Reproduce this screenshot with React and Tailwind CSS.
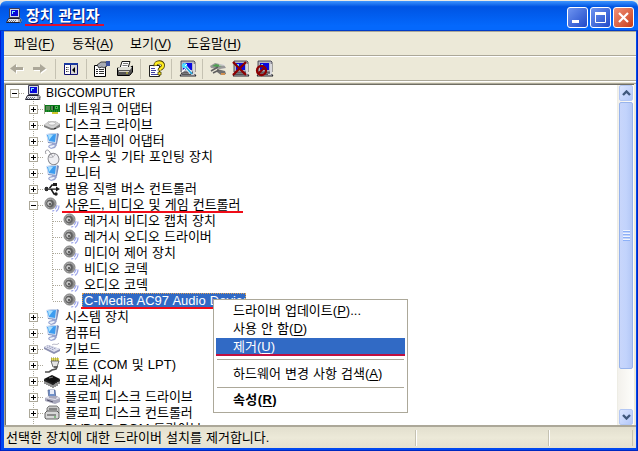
import React from "react";
import clsx from "clsx";

const menus = [
    { label: "파일", hotkey: "F", className: "w-[58px]" },
    { label: "동작", hotkey: "A", className: "w-[58px]" },
    { label: "보기", hotkey: "V", className: "w-[57px]" },
    { label: "도움말", hotkey: "H", className: "w-[70px]" },
];

const rows = [
    { level: 0, icon: "computer", label: "BIGCOMPUTER", open: true, size: "text-[12px]" },
    { level: 1, icon: "network", label: "네트워크 어댑터" },
    { level: 1, icon: "disk", label: "디스크 드라이브" },
    { level: 1, icon: "monitor", label: "디스플레이 어댑터" },
    { level: 1, icon: "mouse", label: "마우스 및 기타 포인팅 장치" },
    { level: 1, icon: "monitor", label: "모니터" },
    { level: 1, icon: "usb", label: "범용 직렬 버스 컨트롤러" },
    { level: 1, icon: "speaker", label: "사운드, 비디오 및 게임 컨트롤러", open: true, marked: true },
    { level: 2, icon: "speaker", label: "레거시 비디오 캡처 장치" },
    { level: 2, icon: "speaker", label: "레거시 오디오 드라이버" },
    { level: 2, icon: "speaker", label: "미디어 제어 장치" },
    { level: 2, icon: "speaker", label: "비디오 코덱" },
    { level: 2, icon: "speaker", label: "오디오 코덱" },
    { level: 2, icon: "speaker", label: "C-Media AC97 Audio Device", selected: true, last: true, size: "text-[13px]" },
    { level: 1, icon: "monitor", label: "시스템 장치" },
    { level: 1, icon: "monitor", label: "컴퓨터" },
    { level: 1, icon: "keyboard", label: "키보드" },
    { level: 1, icon: "port", label: "포트 (COM 및 LPT)" },
    { level: 1, icon: "cpu", label: "프로세서" },
    { level: 1, icon: "floppy", label: "플로피 디스크 드라이브" },
    { level: 1, icon: "controller", label: "플로피 디스크 컨트롤러" },
    { level: 1, icon: "disk", label: "DVD/CD-ROM 드라이브" },
];

const Pc = () => (
    <>
        <path d="M3.500 .5h10v9h-10z" fill="#d4d8e8" stroke="#404058" />
        <path d="M5 2h7v6H5z" fill="#0808d8" />
        <path d="M6 3h3v1H7v2H6z" fill="#80f0ff" />
        <path d="M2.500 10.500h11l1.500 4H.5z" fill="#e8e8ee" stroke="#202030" />
        <path d="M3 12.500h8M2 13.500h8" stroke="#70788c" strokeDasharray="1 1" />
        <path d="M12 11h2v3h-2z" fill="#a8a8b0" />
        <path d="M14 10l1.500 2-1.500 3" stroke="#888" fill="none" />
    </>
);

// larger front-facing machine used by the toolbar buttons
const Desktop = () => (
    <>
        <path d="M1 0h13l1 1v10H1z" fill="#b8b8c0" stroke="#303040" strokeWidth=".8" />
        <path d="M3 2h9v7H3z" fill="#0808e0" />
        <path d="M4 3h2v2H4z" fill="#60e8ff" />
        <path d="M2 12h12l2 3H0z" fill="#d0d0d4" stroke="#101018" strokeWidth=".9" />
        <path d="M13 3h2v10h-2z" fill="#d8d8dc" />
        <path d="M2 13.500h9" stroke="#555" />
    </>
);

const glyphs = {
    computer: <Pc />,
    network: (
        <>
            <path d="M0 3h1v10H0z" fill="#a0a890" />
            <path d="M1 4h15v7H1z" fill="#087818" />
            <path d="M2 5h4v4H2zM7 5h3v4H7z" fill="#103818" />
            <path d="M3 5v4M5 5v4M8 5v4" stroke="#a0d890" />
            <path d="M11 5h3v3h-3z" fill="#48b850" />
            <path d="M12 6h1v1h-1z" fill="#083810" />
            <path d="M8 11h6v2H8z" fill="#d0c830" />
            <path d="M2 10h13" stroke="#40a040" strokeDasharray="1 1" />
        </>
    ),
    disk: (
        <>
            <path d="M0 8l5-4h6l5 3v3l-6 3H7L0 10z" fill="#808080" />
            <path d="M0 8l5-4h6l5 3-6 4H7z" fill="#d2d2d2" />
            <ellipse cx="8" cy="6.500" rx="3.600" ry="1.700" fill="#f4f4f4" stroke="#999" strokeWidth=".6" />
            <path d="M10 11h2v1h-2z" fill="#303030" />
        </>
    ),
    monitor: (
        <>
            <path d="M3 1l10-1 2 1-2 10-9-1z" fill="#7c8cb8" />
            <path d="M2 1l11-1-1 10-8-1z" fill="#cfe0f6" />
            <path d="M3 2l9-1-1 8-6-1z" fill="#3c9cf0" />
            <path d="M4 2l5 0-4 5z" fill="#a8e0ff" />
            <path d="M8 10h4l1 2-2 3-4 1-3-2 1-2 3-1z" fill="#98a4d0" />
            <path d="M5 13l5-1 1 1-4 2z" fill="#f0f4fc" />
        </>
    ),
    mouse: (
        <>
            <path d="M2 5C0 1 4 0 5 2l2 3" fill="none" stroke="#98989e" />
            <ellipse cx="9.500" cy="10" rx="5.400" ry="5.800" fill="#f0f0f4" stroke="#84848a" strokeWidth=".9" transform="rotate(-25 9.500 10)" />
            <path d="M5 8c3 1 5 0 6-3M7 4.500l2 4" fill="none" stroke="#a4a4aa" strokeWidth=".8" />
        </>
    ),
    usb: (
        <>
            <path d="M3 8h10M5 8l3-4h3M7 8l3 5h2" fill="none" stroke="#181818" strokeWidth="1.500" />
            <path d="M0 8l3-2.500v5zM16 8l-4-2.500v5z" fill="#181818" />
            <path d="M1 6h3v4H1z" fill="#303030" />
            <path d="M9 2h4v3H9z" fill="#202020" />
            <circle cx="12" cy="13" r="1.700" fill="#202020" />
            <path d="M4 7.500h8" stroke="#bbb" strokeWidth=".5" />
        </>
    ),
    speaker: (
        <>
            <circle cx="6.500" cy="6.500" r="5.500" fill="#b4b4b4" stroke="#787878" />
            <path d="M7 2a5 5 0 0 1 4 6 6 6 0 0 1-6 4" fill="#888" />
            <circle cx="6" cy="6.500" r="3.800" fill="#606060" />
            <circle cx="5.500" cy="6.500" r="2.200" fill="#c8c8c8" />
            <circle cx="6" cy="7" r="1.100" fill="#484848" />
            <path d="M11 12c1-1 2-2 2-4M12 14.500c2-1.500 3-3 3-6M8 14c1 0 2 0 2-1" fill="none" stroke="#a0a8ec" strokeWidth="1.200" />
        </>
    ),
    keyboard: (
        <>
            <path d="M0 6l4-2 12 4v2l-6 3L0 8z" fill="#8c90b0" />
            <path d="M0 6l5-2 11 4-6 3z" fill="#e0e2f0" />
            <path d="M3 6l7 3M5 5l7 3" stroke="#8a8eb0" strokeDasharray="1 .8" />
            <path d="M8 4c2-2 5 1 7-2" fill="none" stroke="#b0b0c0" />
        </>
    ),
    port: (
        <>
            <path d="M7 1h8v3H7z" fill="#e8e060" />
            <path d="M7 1h8M7 3h8" stroke="#686820" strokeWidth=".8" strokeDasharray="1 1" />
            <path d="M7 4h8l-2 6H9z" fill="#e4e4e4" stroke="#505050" strokeWidth=".8" />
            <path d="M10 10h3l-1 2-4 1-3 2H1" fill="none" stroke="#505050" strokeWidth="1.600" />
        </>
    ),
    cpu: (
        <>
            <path d="M0 6l8-4 8 4-7 6z" fill="#101010" />
            <path d="M0 6l9 4 7-4v2l-7 4-9-4z" fill="#202020" />
            <path d="M1 8v3M3 9v3M5 10v3M7 11v3M9 12v3M11 11v3M13 10v3M15 8v3" stroke="#282828" />
            <path d="M5 5l4-1" stroke="#999" strokeWidth=".8" />
        </>
    ),
    floppy: (
        <>
            <path d="M4 1h7l1 9H5z" fill="#7090c8" stroke="#50608c" strokeWidth=".7" />
            <path d="M6 1h4v4H6z" fill="#e8ecf8" />
            <path d="M1 9l4-2h8l3 2v4l-5 2-10-3z" fill="#a8a8bc" />
            <path d="M1 9l10 2 5-2-3-1-1 2-7-1V7z" fill="#e4e4ee" />
            <path d="M3 11l6 2" stroke="#505068" />
        </>
    ),
    controller: (
        <>
            <path d="M3 3l2-2h8l2 2v5H3z" fill="#c8c8c8" stroke="#606060" strokeWidth=".8" />
            <path d="M1 8l2-2h10l2 2v5l-1 1H2l-1-1z" fill="#d8d8d8" stroke="#505050" strokeWidth=".9" />
            <path d="M3 10h9M5 4h8" stroke="#404040" />
            <path d="M10 12h2" stroke="#30a030" />
        </>
    ),
    back: (
        <>
            <path d="M8 4v3h7v3H8v3L2 8.500z" fill="#fff" />
            <path d="M7 3v3h7v3H7v3L1 7.500z" fill="#aca899" />
        </>
    ),
    forward: (
        <>
            <path d="M9 4v3H2v3h7v3l6-4.500z" fill="#fff" />
            <path d="M8 3v3H1v3h7v3l6-4.500z" fill="#aca899" />
        </>
    ),
    panel: (
        <>
            <path d="M1.500 3.500h13v10h-13z" fill="#fff" stroke="#101070" />
            <path d="M1 2h14v2H1z" fill="#1838a0" />
            <path d="M8 4h6v9H8z" fill="#d8d8d8" />
            <path d="M7.500 4v9" stroke="#101070" />
            <path d="M3 6.500h3M3 8.500h3M3 10.500h3" stroke="#404040" strokeDasharray="1 .5" />
            <path d="M12 6v6L9 9z" fill="#000" />
        </>
    ),
    properties: (
        <>
            <path d="M1.500 4.500h11v11h-11z" fill="#fff" stroke="#000" />
            <path d="M3 8.500h2M6 8.500h5M3 10.500h2M6 10.500h5M3 12.500h2M6 12.500h5" stroke="#303030" />
            <path d="M4 4l4-3h5l1 4-3 2-2-1-3 1z" fill="#a8acb4" stroke="#202020" strokeWidth=".8" />
            <path d="M13 0h4v5h-4z" fill="#40549c" />
        </>
    ),
    printer: (
        <>
            <path d="M5 .5h8l-2 6.500H3z" fill="#fff" stroke="#000" strokeWidth=".9" />
            <path d="M6 2.500h5M5.500 4.500h5" stroke="#555" strokeWidth=".8" />
            <path d="M.5 7h12l3-2v6l-3 3.500H.5z" fill="#555" stroke="#000" />
            <path d="M1 7l2-1h12l-2 3H1z" fill="#e0e0d8" />
            <path d="M2 10.500h10" stroke="#d4d0c8" />
            <path d="M9 12h2" stroke="#e8d830" />
        </>
    ),
    help: (
        <>
            <path d="M.5 4.500h10v11H.5z" fill="#fff" stroke="#202020" />
            <path d="M2 7.500h4M2 9.500h5M2 11.500h4M2 13.500h7" stroke="#4040a0" />
            <path d="M6.500 5C6 0 14.500 0 14 4.500c0 3-3.500 2.500-3.500 5" fill="none" stroke="#403800" strokeWidth="4" />
            <path d="M6.500 4.500C6.500 .5 14 .5 14 4.500c0 3-3.500 2.500-3.500 5" fill="none" stroke="#ffec20" strokeWidth="2.400" />
            <path d="M9 11h3v3H9z" fill="#ffec20" stroke="#403800" strokeWidth=".8" />
        </>
    ),
    scan: (
        <>
            <Desktop />
            <path d="M4 4l7 8" stroke="#fff" strokeWidth="3.400" />
            <path d="M4 4l8 9" stroke="#20a8e0" strokeWidth="1.800" />
            <circle cx="4.500" cy="4.500" r="2.600" fill="#50e0ff" />
            <path d="M7 3l-2 2" stroke="#fff" />
            <path d="M2 11l3-3" stroke="#fff" strokeWidth="1.500" />
        </>
    ),
    update: (
        <>
            <path d="M0 5l5-3 9 2 2 3-6 1-9-1z" fill="#989898" />
            <path d="M2 5l4-2 6 2-5 1z" fill="#4ca050" />
            <path d="M7 8l8 2 1 3-5 1-4-3z" fill="#707070" />
            <path d="M1 10l7-4M3 12l6-3" stroke="#606060" strokeWidth="1.500" />
            <path d="M11 12h4v2h-4z" fill="#d09050" />
            <path d="M9 4h6" stroke="#e8e8e8" />
        </>
    ),
    remove: (
        <>
            <Desktop />
            <path d="M0 1l13 13M13 1L0 14" stroke="#8c0000" strokeWidth="2.400" />
        </>
    ),
    disable: (
        <>
            <g transform="translate(1 0)"><Desktop /></g>
            <circle cx="5.500" cy="9.500" r="4.500" fill="none" stroke="#8c0000" strokeWidth="2.300" />
            <path d="M2 13l7-7" stroke="#8c0000" strokeWidth="2.200" />
        </>
    ),
};

const Icon = ({ name, className }) => (
    <svg viewBox="0 0 16 16" className={clsx("size-4 shrink-0 overflow-visible", className)}>
        {glyphs[name]}
    </svg>
);

const Hotkey = ({ label, hotkey, tail }) => (
    <span>
        {label}(<span className="underline underline-offset-2">{hotkey}</span>){tail}
    </span>
);

// one 19px wide column of the tree: dotted guides and the +/- box
const Guide = ({ through, elbow, top = true, bottom = true, box, open }) => (
    <svg viewBox="0 0 19 16" className="h-4 w-[19px] shrink-0" shapeRendering="crispEdges">
        <g stroke="#aca899" strokeDasharray="1 1">
            {(through || (elbow && top)) && <path d="M9.500 0v8" />}
            {(through || (elbow && bottom)) && <path d="M9.500 8v8" />}
            {elbow && <path d="M10 8.500h9" />}
        </g>
        {box && (
            <>
                <path d="M5.500 4.500h8v8h-8z" fill="#fff" stroke="#aca899" />
                <path d="M7 8.500h5" stroke="#000" />
                {!open && <path d="M9.500 6v5" stroke="#000" />}
            </>
        )}
    </svg>
);

const TreeRow = ({ level, icon, label, open, selected, marked, last, size }) => (
    <div className="-ml-px flex h-4 shrink-0 items-center">
        {level > 0 && <div className="w-[19px] shrink-0" />}
        {level > 1 && <Guide through />}
        <Guide
            elbow
            top={level > 0}
            bottom={level > 0 && !last}
            box={level < 2}
            open={open}
        />
        <Icon name={icon} className="ml-px" />
        <span
            className={clsx(
                "relative ml-[3px] h-4 px-0.5 leading-4",
                size,
                selected && "w-[164px] bg-[#316ac5] text-white outline-1 -outline-offset-1 outline-dotted outline-[#e0a050]"
            )}
        >
            {label}
            {(marked || selected) && (
                <span className="absolute -left-px right-0 top-[14px] h-0.5 bg-[#f00c18]" />
            )}
        </span>
    </div>
);

const Separator = () => <div className="h-5 w-px shrink-0 bg-[#c5c2b2]" />;

const Toolbar = () => (
    <div className="flex h-6 items-center border-b border-[#aca899] pl-[5px]">
        <Icon name="back" />
        <Icon name="forward" className="ml-[7px] mr-[7px]" />
        <Separator />
        <Icon name="panel" className="mx-[7px]" />
        <Separator />
        <Icon name="properties" className="ml-[6px]" />
        <Icon name="printer" className="ml-2 mr-[7px]" />
        <Separator />
        <Icon name="help" className="ml-2 mr-[6px]" />
        <Separator />
        <Icon name="scan" className="ml-2 mr-[6px]" />
        <Separator />
        <Icon name="update" className="ml-[7px]" />
        <Icon name="remove" className="ml-[7px]" />
        <Icon name="disable" className="ml-[7px]" />
    </div>
);

const WindowButton = ({ children, className }) => (
    <button
        className={clsx(
            "flex size-[21px] items-center justify-center rounded-[3px] border border-white bg-linear-to-br",
            className
        )}
    >
        <svg viewBox="0 0 19 19" className="size-[19px]" fill="none" stroke="#fff">
            {children}
        </svg>
    </button>
);

const TitleBar = () => (
    <div className="flex h-[30px] items-center rounded-t-[6px] border-b border-[#003cc8] bg-linear-to-b from-[#3c94ff] from-0% via-[#0054e3] via-20% to-[#0468fc] to-85% pl-[6px] pr-1">
        <Icon name="computer" />
        <h1 className="relative ml-1 text-[15px] font-bold leading-[18px] text-white [text-shadow:1px_1px_0_#0a1883]">
            장치 관리자
            <span className="absolute -left-px top-[17px] h-0.5 w-[79px] bg-[#e01030]" />
        </h1>
        <div className="ml-auto mt-[3px] flex gap-0.5">
            <WindowButton className="from-[#6f94f0] to-[#2248c8]">
                <path d="M4 13.500h7" strokeWidth="3" />
            </WindowButton>
            <WindowButton className="from-[#6f94f0] to-[#2248c8]">
                <path d="M4.500 5v9.500h10V5" />
                <path d="M4 5.500h11" strokeWidth="3" />
            </WindowButton>
            <WindowButton className="from-[#f09078] to-[#c83c10]">
                <path d="M5 5l9 9M14 5l-9 9" strokeWidth="2.200" />
            </WindowButton>
        </div>
    </div>
);

const ScrollArrow = ({ down }) => (
    <div className="flex h-4 items-center justify-center rounded-[2px] border border-[#b4c8f4] bg-linear-to-br from-[#dce6ff] to-[#b4c8f8]">
        <svg viewBox="0 0 9 6" className="h-1.5 w-[9px]" fill="none" stroke="#40587c" strokeWidth="2.400">
            <path d={down ? "M1 1l3.500 3.500L8 1" : "M1 5l3.500-3.500L8 5"} />
        </svg>
    </div>
);

const ScrollBar = () => (
    <div className="flex w-[17px] shrink-0 flex-col border-l border-[#eeede5] bg-linear-to-r from-[#f3f1ec] to-[#fefefb] px-px">
        <ScrollArrow />
        <div className="mt-px flex h-[267px] flex-col items-center justify-center gap-px rounded-[2px] border border-[#98b4ec] bg-linear-to-r from-[#c8d6fb] via-[#c2d3fc] to-[#b4c8f6]">
            {[0, 1, 2, 3].map((i) => (
                <div key={i} className="h-0.5 w-[7px] border-b border-[#8cb0f8] bg-[#eef4fe]" />
            ))}
        </div>
        <div className="flex-1" />
        <ScrollArrow down />
    </div>
);

const ContextMenu = () => (
    <div className="absolute left-[213px] top-[299px] h-[114px] w-[195px] border border-[#aca899] bg-white p-0.5 leading-[18px]">
        <div className="h-[18px] pl-[17px]"><Hotkey label="드라이버 업데이트" hotkey="P" tail="..." /></div>
        <div className="h-[18px] pl-[17px]"><Hotkey label="사용 안 함" hotkey="D" /></div>
        <div className="h-[18px] border-b-2 border-[#c01040] bg-[#316ac5] pl-[17px] leading-[17px] text-white">
            <Hotkey label="제거" hotkey="U" />
        </div>
        <div className="mx-px mb-[5px] mt-[3px] h-px bg-[#aca899]" />
        <div className="h-[18px] pl-[17px]"><Hotkey label="하드웨어 변경 사항 검색" hotkey="A" /></div>
        <div className="mx-px mb-[3px] mt-1 h-px bg-[#aca899]" />
        <div className="h-[18px] pl-[17px] font-bold tracking-[0.4px]"><Hotkey label="속성" hotkey="R" /></div>
    </div>
);

export default function App() {
    return (
        <div className="relative flex h-[451px] w-[638px] flex-col overflow-hidden bg-[#e8e8e4] pt-px font-['Liberation_Sans','Noto_Sans_CJK_KR',sans-serif] text-[13px] text-black [word-spacing:0.5px]">
            <TitleBar />
            <div className="flex min-h-0 flex-1 flex-col bg-[#0048f0] pb-[3px] pl-1 pr-0.5 shadow-[inset_1px_0_0_#0019cf,inset_-1px_-1px_0_#0028c0]">
                <div className="flex min-h-0 flex-1 flex-col bg-[#ece9d8]">
                    <div className="flex h-[25px] items-center border-b border-t border-b-[#aca899] border-t-[#aca899] pl-2.5">
                        {menus.map((menu) => (
                            <div key={menu.hotkey} className={menu.className}>
                                <Hotkey label={menu.label} hotkey={menu.hotkey} />
                            </div>
                        ))}
                    </div>
                    <div className="border-b-2 border-t border-white">
                        <div className="-mb-px"><Toolbar /></div>
                    </div>

                    {/* Device tree */}
                    <div className="mt-px flex h-[342px] border-l border-t border-[#aca899] pr-0.5">
                        <div className="flex min-w-0 flex-1 border-l border-t border-[#716f64] bg-white">
                            <div className="flex min-w-0 flex-1 flex-col overflow-hidden whitespace-nowrap">
                                {rows.map((row, i) => (
                                    <TreeRow key={i} {...row} />
                                ))}
                            </div>
                            <ScrollBar />
                        </div>
                    </div>

                    {/* Status bar */}
                    <div className="flex flex-1 items-center border-t-2 border-t-[#aca899] bg-linear-to-b from-[#e2dfce] via-[#ece9d8] to-[#e4e1d0] pl-0.5">
                        <div className="w-[409px] whitespace-nowrap">선택한 장치에 대한 드라이버 설치를 제거합니다.</div>
                        <div className="h-4 w-[133px] border-l border-[#c5c2b2] shadow-[inset_1px_0_0_#fff]" />
                        <div className="h-4 w-[85px] border-l border-r border-[#c5c2b2] shadow-[inset_1px_0_0_#fff]" />
                    </div>
                </div>
            </div>
            <ContextMenu />
        </div>
    );
}
